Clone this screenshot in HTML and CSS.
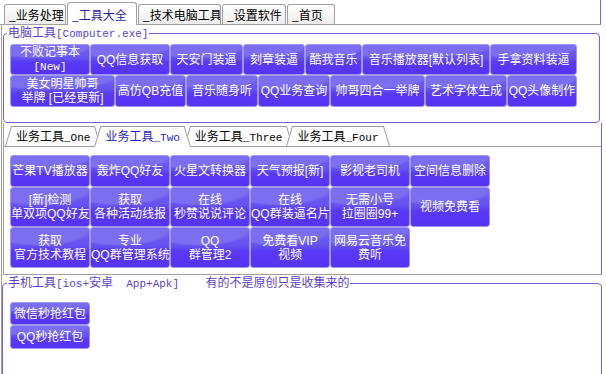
FILE: index.html
```html
<!DOCTYPE html>
<html lang="zh-CN">
<head>
    <meta charset="UTF-8">
    <meta name="viewport" content="width=device-width, initial-scale=1.0">
    <title>工具大全</title>
    <link rel="stylesheet" href="styles.css">
</head>
<body>

<div class="top-tabs">
    <div class="top-tab">_业务处理</div>
    <div class="top-tab active">_工具大全</div>
    <div class="top-tab">_技术电脑工具</div>
    <div class="top-tab">_设置软件</div>
    <div class="top-tab">_首页</div>
</div>

<div class="page">
    <fieldset class="group group-pc">
        <legend>电脑工具<span class="en">[Computer.exe]</span></legend>
        <div class="row row-pc1">
            <button class="btn">不败记事本<br><span class="en">[New]</span></button>
            <button class="btn">QQ信息获取</button>
            <button class="btn">天安门装逼</button>
            <button class="btn">刻章装逼</button>
            <button class="btn">酷我音乐</button>
            <button class="btn">音乐播放器[默认列表]</button>
            <button class="btn">手拿资料装逼</button>
        </div>
        <div class="row row-pc2">
            <button class="btn">美女明星帅哥<br>举牌 [已经更新]</button>
            <button class="btn">高仿QB充值</button>
            <button class="btn">音乐随身听</button>
            <button class="btn">QQ业务查询</button>
            <button class="btn">帅哥四合一举牌</button>
            <button class="btn">艺术字体生成</button>
            <button class="btn">QQ头像制作</button>
        </div>
    </fieldset>

    <div class="sub-panel">
        <div class="sub-tabs">
            <div class="sub-tab tab-one">业务工具<span class="en">_One</span></div>
            <div class="sub-tab tab-two active">业务工具<span class="en">_Two</span></div>
            <div class="sub-tab tab-three">业务工具<span class="en">_Three</span></div>
            <div class="sub-tab tab-four">业务工具<span class="en">_Four</span></div>
        </div>
        <div class="sub-page">
            <button class="btn">芒果TV播放器</button>
            <button class="btn">轰炸QQ好友</button>
            <button class="btn">火星文转换器</button>
            <button class="btn">天气预报[新]</button>
            <button class="btn">影视老司机</button>
            <button class="btn">空间信息删除</button>

            <button class="btn">[新]检测<br>单双项QQ好友</button>
            <button class="btn">获取<br>各种活动线报</button>
            <button class="btn">在线<br>秒赞说说评论</button>
            <button class="btn">在线<br>QQ群装逼名片</button>
            <button class="btn">无需小号<br>拉圈圈99+</button>
            <button class="btn">视频免费看</button>

            <button class="btn">获取<br>官方技术教程</button>
            <button class="btn">专业<br>QQ群管理系统</button>
            <button class="btn">QQ<br>群管理2</button>
            <button class="btn">免费看VIP<br>视频</button>
            <button class="btn">网易云音乐免<br>费听</button>
        </div>
    </div>

    <fieldset class="group group-phone">
        <legend>手机工具<span class="en">[ios+</span>安卓<span class="en">  App+Apk]    </span>有的不是原创只是收集来的</legend>
        <div class="phone-list">
            <button class="btn">微信秒抢红包</button>
            <button class="btn">QQ秒抢红包</button>
        </div>
    </fieldset>
</div>

</body>
</html>
```

FILE: styles.css
```css
body {
    margin: 0;
    width: 606px;
    height: 374px;
    overflow: hidden;
    background-color: #fff;
    font-family: "Noto Sans CJK SC", sans-serif;
    font-size: 12px;
    color: #000;
}

.en {
    font-family: "Liberation Mono", "Noto Sans CJK SC", monospace;
    font-size: 11px;
    white-space: pre;
}

/* top tab strip */
.top-tabs {
    display: grid;
    grid-template-columns: 62px 70px 83px 64px 48px;
    column-gap: 1px;
    align-items: end;
    height: 24px;
    padding-left: 4px;
    margin-right: 5px;
    border-bottom: 1px solid #a0a0a0;
    border-right: 1px solid #7563d6;
}

.top-tab {
    height: 20px;
    box-sizing: border-box;
    padding: 1px 0 0 4px;
    line-height: 18px;
    border: 1px solid #a0a0a0;
    border-bottom: none;
    border-radius: 3px 3px 0 0;
    background: linear-gradient(#ffffff, #ededed);
    white-space: nowrap;
    overflow: hidden;
}

.top-tab.active {
    height: 23px;
    margin-bottom: -1px;
    padding-top: 3px;
    background: #fff;
    color: #1e1ea8;
}

.page {
    margin-left: 1px;
    border-left: 1px solid #a0a0a0;
}

/* group boxes */
.group {
    margin: 0;
    min-width: 0;
    border: 1px solid #7563d6;
    border-radius: 4px;
}

.group legend {
    margin-left: -3px;
    padding: 0 1px;
    line-height: 14px;
    color: #5a3fd2;
}

.group-pc {
    margin: 0 6px 0 1px;
    padding: 3px 0 15px 6px;
}

.group-phone {
    margin: 0 4px 0 0;
    padding: 11px 0 40px 7px;
}

.row {
    display: grid;
}

.row-pc1 {
    grid-template-columns: 80px 80px 73px 62px 57px 128px 87px;
    height: 31px;
}

.row-pc2 {
    grid-template-columns: 105px 71px 72px 72px 95px 82px 70px;
    height: 32px;
}

/* inner tab control */
.sub-panel {
    margin: 0 4px 0 1px;
    border-left: 1px solid #a0a0a0;
    border-right: 1px solid #7563d6;
    border-bottom: 1px solid #a0a0a0;
}

.sub-tabs {
    display: flex;
    align-items: flex-end;
    height: 23px;
    padding-left: 1px;
    border-bottom: 1px solid #a0a0a0;
}

.sub-tab {
    position: relative;
    z-index: 1;
    height: 20px;
    padding: 0 11px;
    margin-left: -7px;
    line-height: 20px;
    white-space: nowrap;
}

.sub-tab::before,
.sub-tab::after {
    content: "";
    position: absolute;
    top: 0;
    bottom: 0;
    z-index: -1;
    background: #fff;
    border-top: 1px solid #9c9c9c;
}

.sub-tab::before {
    left: 0;
    right: 45%;
    border-left: 1px solid #9c9c9c;
    transform: skewX(-17deg);
    transform-origin: 0 100%;
}

.sub-tab::after {
    left: 45%;
    right: 0;
    border-right: 1px solid #9c9c9c;
    transform: skewX(17deg);
    transform-origin: 100% 100%;
}

.sub-tab.tab-one {
    margin-left: 0;
}

.sub-tab.tab-three {
    z-index: 2;
}

.sub-tab.tab-four {
    z-index: 3;
}

.sub-tab.active {
    z-index: 4;
    height: 21px;
    margin-bottom: -1px;
    line-height: 20px;
    color: #1f1fc4;
}

.sub-page {
    display: grid;
    grid-template-columns: repeat(6, 80px);
    grid-template-rows: 32px 40px 41px;
    padding: 8px 0 6px 6px;
}

.phone-list {
    display: grid;
    grid-template-columns: 80px;
    grid-template-rows: 23px 24px;
}

/* purple skin buttons */
.btn {
    margin: 0;
    padding: 0;
    box-sizing: border-box;
    font-family: "Liberation Sans", "Noto Sans CJK SC", sans-serif;
    font-size: 12px;
    line-height: 14px;
    color: #fff;
    text-align: center;
    white-space: nowrap;
    border: 1px solid #a196f2;
    border-radius: 3px;
    background:
        radial-gradient(ellipse 85% 55% at 35% 0%, #7b6ef0 75%, rgba(123, 110, 240, 0) 85%),
        linear-gradient(#6d5ff0 0%, #6553f1 45%, #5839f5 60%, #5533f3 100%);
    cursor: pointer;
}

.btn .en {
    font-family: "Liberation Mono", monospace;
    font-size: 11px;
}
```
